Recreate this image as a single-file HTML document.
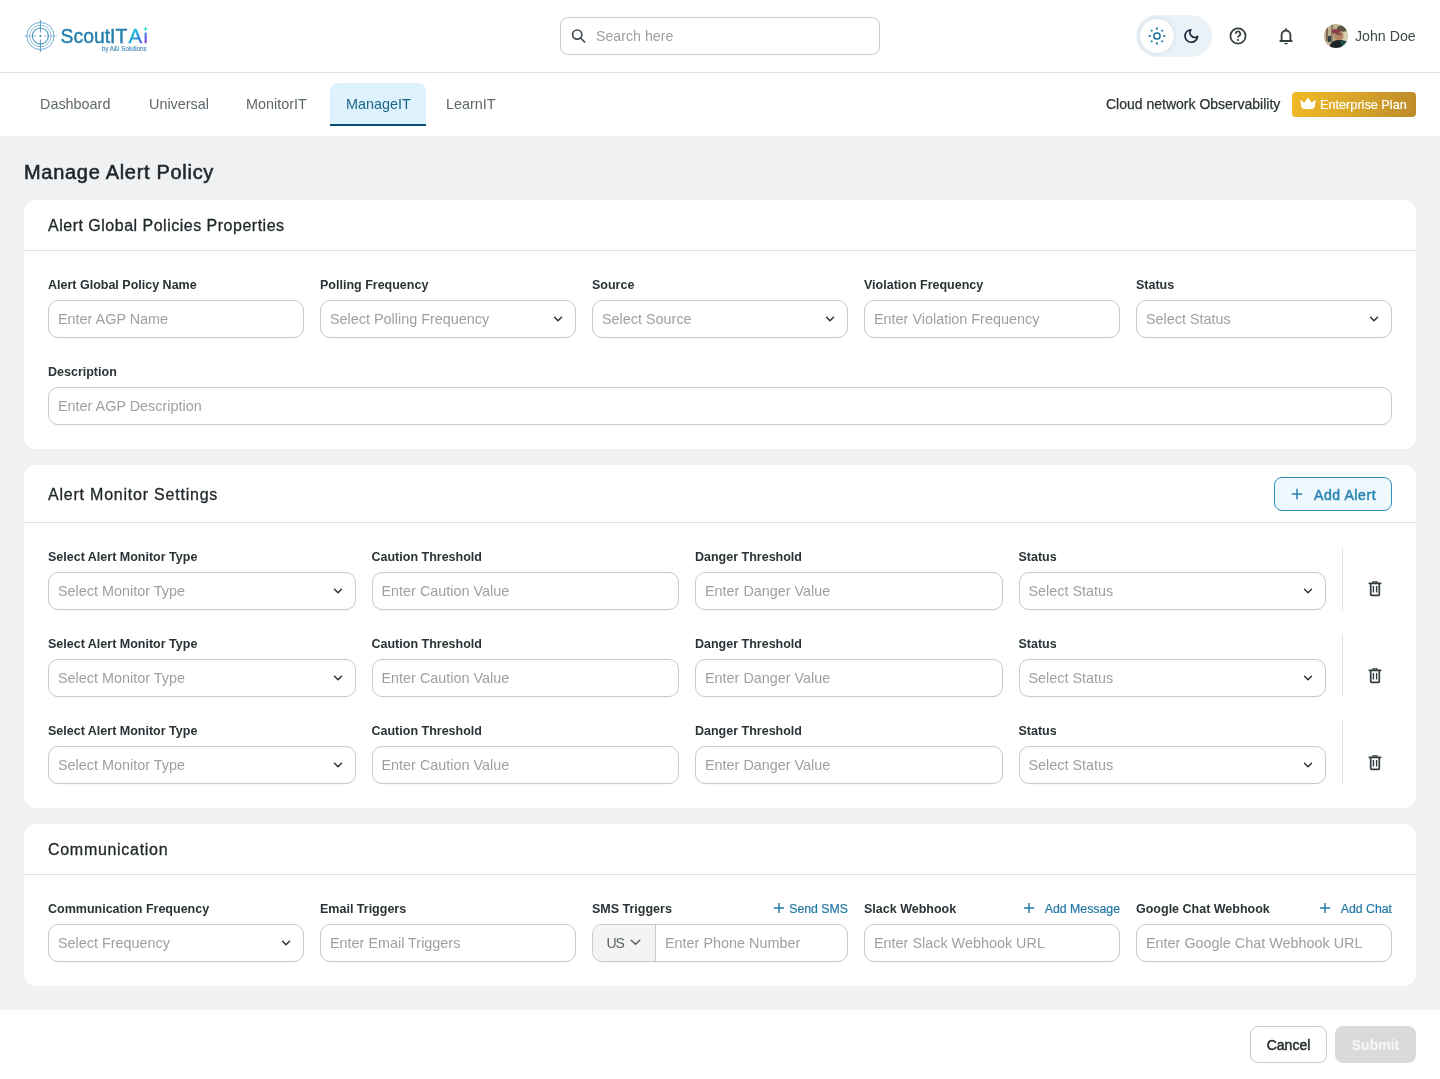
<!DOCTYPE html>
<html><head><meta charset="utf-8">
<style>
*{box-sizing:border-box;margin:0;padding:0}
html,body{width:1440px;height:1079px;overflow:hidden;background:#fff;font-family:"Liberation Sans",sans-serif}
body{-webkit-font-smoothing:antialiased}
#wrap{position:absolute;left:0;top:0;width:1440px;height:1079px;will-change:transform;opacity:0.999}
.abs{position:absolute}
#hdr{position:absolute;left:0;top:0;width:1440px;height:73px;background:#fff;border-bottom:1px solid #e4e4e5}
#nav{position:absolute;left:0;top:73px;width:1440px;height:63px;background:#fff}
#main{position:absolute;left:0;top:136px;width:1440px;height:874px;background:#f0f1f3}
#foot{position:absolute;left:0;top:1010px;width:1440px;height:69px;background:#fff}
.card{position:absolute;left:24px;width:1392px;background:#fff;border-radius:12px}
.chd{position:absolute;left:0;top:0;width:1392px;border-bottom:1px solid #e0e1e2}
.ctitle{position:absolute;left:24px;font-size:16px;line-height:20px;color:#1f2629;letter-spacing:0.5px;white-space:nowrap;-webkit-text-stroke:0.3px #1f2629}
.lbl{position:absolute;font-weight:bold;font-size:12.5px;line-height:16px;color:#2b3336;white-space:nowrap}
.inp{position:absolute;height:38px;border:1px solid #c8cacc;border-radius:10px;background:#fff;font-size:14.4px;line-height:36px;color:#9da1a4;padding-left:9px;white-space:nowrap;overflow:hidden;box-shadow:0 1px 1px rgba(0,0,0,0.03)}
.chev{position:absolute;right:12px;top:15px;width:10px;height:6px}
.tab{position:absolute;top:10px;height:43px;font-size:14.4px;line-height:43px;color:#5d676b;white-space:nowrap}
.link{position:absolute;font-size:12.3px;line-height:16px;color:#2479a8;white-space:nowrap;-webkit-text-stroke:0.2px #2479a8}
</style></head>
<body>
<div id="wrap">
<div id="hdr">
  <!-- logo -->
  <svg class="abs" style="left:20px;top:16px" width="44" height="40" viewBox="20 16 44 40">
    <g fill="none" stroke="#4f97bf" stroke-width="1">
      <circle cx="40.4" cy="36" r="13.6" opacity="0.8"/>
      <circle cx="40.4" cy="36" r="10.8" opacity="0.6"/>
      <circle cx="40.4" cy="36" r="8" stroke-width="1.1"/>
      <line x1="40.4" y1="20" x2="40.4" y2="32.5"/>
      <line x1="40.4" y1="39.5" x2="40.4" y2="52"/>
      <line x1="24" y1="36" x2="37" y2="36" opacity="0.5"/>
      <line x1="44" y1="36" x2="57" y2="36" opacity="0.5"/>
    </g>
    <circle cx="40.4" cy="36" r="1" fill="#2b7fad"/>
  </svg>
  <svg class="abs" style="left:56px;top:16px" width="104" height="40" viewBox="56 16 104 40">
    <defs><linearGradient id="ga" x1="129" y1="28" x2="148" y2="44" gradientUnits="userSpaceOnUse"><stop offset="0" stop-color="#14f0bd"/><stop offset="0.55" stop-color="#2a86e6"/><stop offset="1" stop-color="#8a3bd2"/></linearGradient></defs>
    <text x="60.6" y="43.3" font-family="Liberation Sans" font-size="20.8" fill="#237fad" stroke="#237fad" stroke-width="0.45" textLength="66.6" lengthAdjust="spacingAndGlyphs">ScoutIT</text>
    <text x="128.6" y="43.3" font-family="Liberation Sans" font-size="20.8" fill="url(#ga)" stroke="url(#ga)" stroke-width="0.35" textLength="13.6" lengthAdjust="spacingAndGlyphs">A</text>
    <rect x="144.6" y="32.6" width="2.1" height="10.7" fill="url(#ga)"/>
    <path d="M145.6 26.2 L146.3 28.2 L148.2 28.9 L146.3 29.6 L145.6 31.6 L144.9 29.6 L143 28.9 L144.9 28.2Z" fill="#22e3c4"/>
    <text x="101.8" y="51.3" font-family="Liberation Sans" font-size="6.6" fill="#4a8fbb" stroke="#4a8fbb" stroke-width="0.15" textLength="44.8" lengthAdjust="spacingAndGlyphs">by A&amp;I Solutions</text>
  </svg>
  <!-- search -->
  <div class="abs" style="left:560px;top:17px;width:320px;height:38px;border:1px solid #c8cacc;border-radius:8px;background:#fff"></div>
  <svg class="abs" style="left:570px;top:27px" width="18" height="18" viewBox="0 0 18 18">
    <circle cx="7.2" cy="7.6" r="4.6" fill="none" stroke="#434d51" stroke-width="1.7"/>
    <line x1="10.6" y1="11" x2="14.6" y2="15" stroke="#434d51" stroke-width="1.7" stroke-linecap="round"/>
  </svg>
  <div class="abs" style="left:596px;top:26px;font-size:14.2px;line-height:20px;color:#9aa0a4;white-space:nowrap">Search here</div>

  <!-- toggle -->
  <div class="abs" style="left:1136px;top:15px;width:76px;height:42px;border-radius:21px;background:#ebf2f7"></div>
  <div class="abs" style="left:1140px;top:19px;width:34px;height:34px;border-radius:17px;background:#fff;box-shadow:0 0 4px rgba(120,140,160,0.25)"></div>
  <svg class="abs" style="left:1147px;top:26px" width="20" height="20" viewBox="0 0 20 20">
    <g stroke="#1b6f9c" stroke-width="1.7" stroke-linecap="butt" fill="none">
      <circle cx="10" cy="10" r="3.1" stroke-width="1.5"/>
      <line x1="10" y1="1.6" x2="10" y2="3.8"/><line x1="10" y1="16.2" x2="10" y2="18.4"/>
      <line x1="1.6" y1="10" x2="3.8" y2="10"/><line x1="16.2" y1="10" x2="18.4" y2="10"/>
      <line x1="4.1" y1="4.1" x2="5.4" y2="5.4"/><line x1="14.6" y1="14.6" x2="15.9" y2="15.9"/>
      <line x1="4.1" y1="15.9" x2="5.4" y2="14.6"/><line x1="14.6" y1="5.4" x2="15.9" y2="4.1"/>
    </g>
  </svg>
  <svg class="abs" style="left:1181px;top:26px" width="20" height="20" viewBox="0 0 20 20">
    <path d="M9.9 3.7 A6.3 6.3 0 1 0 16.6 10.4 A4.8 4.8 0 0 1 9.9 3.7 Z" fill="none" stroke="#0e2233" stroke-width="1.6" stroke-linejoin="round"/>
  </svg>

  <!-- help -->
  <svg class="abs" style="left:1228px;top:26px" width="20" height="20" viewBox="0 0 20 20">
    <circle cx="10" cy="10" r="7.6" fill="none" stroke="#333c40" stroke-width="1.7"/>
    <path d="M7.7 7.8 A2.3 2.3 0 1 1 10.9 9.9 C10.2 10.3 10 10.8 10 11.6" fill="none" stroke="#333c40" stroke-width="1.7" stroke-linecap="butt"/>
    <rect x="9.1" y="13.1" width="1.8" height="1.8" fill="#333c40"/>
  </svg>
  <!-- bell -->
  <svg class="abs" style="left:1276px;top:26px" width="20" height="20" viewBox="0 0 20 20">
    <path d="M5.6 15 V8.9 A4.4 4.4 0 0 1 14.4 8.9 V15" fill="none" stroke="#333c40" stroke-width="1.8"/>
    <line x1="4.3" y1="15" x2="15.7" y2="15" stroke="#333c40" stroke-width="1.8" stroke-linecap="round"/>
    <circle cx="10" cy="3.2" r="1" fill="#333c40"/>
    <path d="M8.8 17.6 H11.2" stroke="#333c40" stroke-width="1.3" stroke-linecap="round"/>
  </svg>
  <!-- avatar -->
  <svg class="abs" style="left:1324px;top:24px" width="24" height="24" viewBox="0 0 24 24">
    <defs><clipPath id="avc"><circle cx="12" cy="12" r="12"/></clipPath><filter id="avb" filterUnits="userSpaceOnUse" x="-4" y="-4" width="32" height="32"><feGaussianBlur stdDeviation="0.55"/></filter></defs>
    <g clip-path="url(#avc)"><g filter="url(#avb)">
      <rect x="-2" y="-2" width="28" height="28" fill="#c2b393"/>
      <rect x="2" y="2" width="2" height="16" fill="#7a6a55"/>
      <rect x="7" y="0" width="2.2" height="18" fill="#8d7d66"/>
      <rect x="4" y="12" width="3" height="6" fill="#2f3f45"/>
      <ellipse cx="18.5" cy="4.5" rx="5.5" ry="3.2" fill="#5a5744"/>
      <ellipse cx="23" cy="9.5" rx="2.5" ry="1.5" fill="#3d7a6e"/>
      <rect x="18" y="8" width="6" height="9" fill="#d9cdb0"/>
      <ellipse cx="14.8" cy="11.5" rx="4.6" ry="5.6" fill="#b48566"/>
      <ellipse cx="12" cy="7.3" rx="4.2" ry="2.4" fill="#8b3a4d"/>
      <rect x="12.5" y="9.6" width="5" height="1.3" fill="#6a5040"/>
      <ellipse cx="9" cy="19.5" rx="1.2" ry="1.6" fill="#c27a2e"/>
      <path d="M4 26 L7 19 Q11 15.5 15 16.2 Q20 15.5 25 19 L26 26 Z" fill="#1c2526"/>
      <path d="M16 16.5 Q21 16 25 19.5 L25 26 L19 26 Q18 21 16 16.5Z" fill="#1d4d50"/>
      <rect x="-2" y="17" width="6" height="10" fill="#b7ab8c"/>
    </g></g>
  </svg>
  <div class="abs" style="left:1355px;top:26px;font-size:14.2px;line-height:20px;color:#3f474b;white-space:nowrap">John Doe</div>
</div>

<div id="nav">
  <div class="tab" style="left:40px">Dashboard</div>
  <div class="tab" style="left:149px">Universal</div>
  <div class="tab" style="left:246px">MonitorIT</div>
  <div class="abs" style="left:330px;top:10px;width:96px;height:43px;background:#ddf2fc;border-radius:8px 8px 0 0;border-bottom:2px solid #0a4e74"></div>
  <div class="tab" style="left:346px;color:#1a6588">ManageIT</div>
  <div class="tab" style="left:446px">LearnIT</div>

  <div class="abs" style="left:1106px;top:21px;font-size:14px;line-height:20px;color:#2b3437;white-space:nowrap;-webkit-text-stroke:0.25px #2b3437">Cloud network Observability</div>
  <div class="abs" style="left:1292px;top:19px;width:124px;height:25px;border-radius:4px;background:linear-gradient(100deg,#f1b925 0%,#d9a629 50%,#bd8a2b 100%)"></div>
  <svg class="abs" style="left:1299px;top:97px;top:24px" width="18" height="14" viewBox="0 0 18 14">
    <path d="M1.8 3.6 L5.4 6.6 L9 1.6 L12.6 6.6 L16.2 3.6 L14.8 10.6 Q9 12.6 3.2 10.6 Z" fill="#fff" stroke="#fff" stroke-width="1.2" stroke-linejoin="round"/>
  </svg>
  <div class="abs" style="left:1320px;top:23.7px;font-size:12.7px;line-height:16px;color:#fff;white-space:nowrap;-webkit-text-stroke:0.2px #fff">Enterprise Plan</div>
</div>

<div id="main">
  <div class="abs" style="left:24px;top:23px;font-size:20px;line-height:26px;color:#1f2629;letter-spacing:0.7px;white-space:nowrap;-webkit-text-stroke:0.55px #1f2629">Manage Alert Policy</div>
</div>

<!-- CARD 1 -->
<div class="card" style="top:200px;height:249px">
  <div class="chd" style="height:51px"></div>
  <div class="ctitle" style="top:15.7px">Alert Global Policies Properties</div>
</div>

<!-- CARD 2 -->
<div class="card" style="top:465px;height:343px">
  <div class="chd" style="height:58px"></div>
  <div class="ctitle" style="top:19.7px;letter-spacing:0.78px">Alert Monitor Settings</div>
</div>

<!-- CARD 3 -->
<div class="card" style="top:824px;height:162px">
  <div class="chd" style="height:51px"></div>
  <div class="ctitle" style="top:15.7px;letter-spacing:0.7px">Communication</div>
</div>

<!--FIELDS-->
<div class="lbl" style="left:48px;top:276.7px">Alert Global Policy Name</div>
<div class="inp" style="left:48px;top:300px;width:256px">Enter AGP Name</div>
<div class="lbl" style="left:320px;top:276.7px">Polling Frequency</div>
<div class="inp" style="left:320px;top:300px;width:256px">Select Polling Frequency<svg class="chev" viewBox="0 0 10 6"><path d="M1.5 1.3 L5 4.7 L8.5 1.3" fill="none" stroke="#2b3336" stroke-width="1.5" stroke-linecap="round" stroke-linejoin="round"/></svg></div>
<div class="lbl" style="left:592px;top:276.7px">Source</div>
<div class="inp" style="left:592px;top:300px;width:256px">Select Source<svg class="chev" viewBox="0 0 10 6"><path d="M1.5 1.3 L5 4.7 L8.5 1.3" fill="none" stroke="#2b3336" stroke-width="1.5" stroke-linecap="round" stroke-linejoin="round"/></svg></div>
<div class="lbl" style="left:864px;top:276.7px">Violation Frequency</div>
<div class="inp" style="left:864px;top:300px;width:256px">Enter Violation Frequency</div>
<div class="lbl" style="left:1136px;top:276.7px">Status</div>
<div class="inp" style="left:1136px;top:300px;width:256px">Select Status<svg class="chev" viewBox="0 0 10 6"><path d="M1.5 1.3 L5 4.7 L8.5 1.3" fill="none" stroke="#2b3336" stroke-width="1.5" stroke-linecap="round" stroke-linejoin="round"/></svg></div>
<div class="lbl" style="left:48px;top:363.7px">Description</div>
<div class="inp" style="left:48px;top:387px;width:1344px">Enter AGP Description</div>
<div class="lbl" style="left:48px;top:548.7px">Select Alert Monitor Type</div>
<div class="inp" style="left:48px;top:572px;width:307.5px">Select Monitor Type<svg class="chev" viewBox="0 0 10 6"><path d="M1.5 1.3 L5 4.7 L8.5 1.3" fill="none" stroke="#2b3336" stroke-width="1.5" stroke-linecap="round" stroke-linejoin="round"/></svg></div>
<div class="lbl" style="left:371.5px;top:548.7px">Caution Threshold</div>
<div class="inp" style="left:371.5px;top:572px;width:307.5px">Enter Caution Value</div>
<div class="lbl" style="left:695px;top:548.7px">Danger Threshold</div>
<div class="inp" style="left:695px;top:572px;width:307.5px">Enter Danger Value</div>
<div class="lbl" style="left:1018.5px;top:548.7px">Status</div>
<div class="inp" style="left:1018.5px;top:572px;width:307.5px">Select Status<svg class="chev" viewBox="0 0 10 6"><path d="M1.5 1.3 L5 4.7 L8.5 1.3" fill="none" stroke="#2b3336" stroke-width="1.5" stroke-linecap="round" stroke-linejoin="round"/></svg></div>
<div class="abs" style="left:1342px;top:547px;width:1px;height:63px;background:#e2e3e4"></div>
<svg class="abs" style="left:1366px;top:579px" width="18" height="20" viewBox="0 0 18 20"><path d="M3.3 4.3 H14.7" stroke="#333c40" stroke-width="1.7" stroke-linecap="round"/><path d="M7 3.9 V2.9 H11 V3.9" fill="none" stroke="#333c40" stroke-width="1.3"/><path d="M4.7 4.6 V15.5 Q4.7 16.4 5.6 16.4 H12.4 Q13.3 16.4 13.3 15.5 V4.6" fill="none" stroke="#333c40" stroke-width="1.7"/><path d="M7.4 7 V13.6 M10.6 7 V13.6" stroke="#333c40" stroke-width="1.4"/></svg>
<div class="lbl" style="left:48px;top:635.7px">Select Alert Monitor Type</div>
<div class="inp" style="left:48px;top:659px;width:307.5px">Select Monitor Type<svg class="chev" viewBox="0 0 10 6"><path d="M1.5 1.3 L5 4.7 L8.5 1.3" fill="none" stroke="#2b3336" stroke-width="1.5" stroke-linecap="round" stroke-linejoin="round"/></svg></div>
<div class="lbl" style="left:371.5px;top:635.7px">Caution Threshold</div>
<div class="inp" style="left:371.5px;top:659px;width:307.5px">Enter Caution Value</div>
<div class="lbl" style="left:695px;top:635.7px">Danger Threshold</div>
<div class="inp" style="left:695px;top:659px;width:307.5px">Enter Danger Value</div>
<div class="lbl" style="left:1018.5px;top:635.7px">Status</div>
<div class="inp" style="left:1018.5px;top:659px;width:307.5px">Select Status<svg class="chev" viewBox="0 0 10 6"><path d="M1.5 1.3 L5 4.7 L8.5 1.3" fill="none" stroke="#2b3336" stroke-width="1.5" stroke-linecap="round" stroke-linejoin="round"/></svg></div>
<div class="abs" style="left:1342px;top:634px;width:1px;height:63px;background:#e2e3e4"></div>
<svg class="abs" style="left:1366px;top:666px" width="18" height="20" viewBox="0 0 18 20"><path d="M3.3 4.3 H14.7" stroke="#333c40" stroke-width="1.7" stroke-linecap="round"/><path d="M7 3.9 V2.9 H11 V3.9" fill="none" stroke="#333c40" stroke-width="1.3"/><path d="M4.7 4.6 V15.5 Q4.7 16.4 5.6 16.4 H12.4 Q13.3 16.4 13.3 15.5 V4.6" fill="none" stroke="#333c40" stroke-width="1.7"/><path d="M7.4 7 V13.6 M10.6 7 V13.6" stroke="#333c40" stroke-width="1.4"/></svg>
<div class="lbl" style="left:48px;top:722.7px">Select Alert Monitor Type</div>
<div class="inp" style="left:48px;top:746px;width:307.5px">Select Monitor Type<svg class="chev" viewBox="0 0 10 6"><path d="M1.5 1.3 L5 4.7 L8.5 1.3" fill="none" stroke="#2b3336" stroke-width="1.5" stroke-linecap="round" stroke-linejoin="round"/></svg></div>
<div class="lbl" style="left:371.5px;top:722.7px">Caution Threshold</div>
<div class="inp" style="left:371.5px;top:746px;width:307.5px">Enter Caution Value</div>
<div class="lbl" style="left:695px;top:722.7px">Danger Threshold</div>
<div class="inp" style="left:695px;top:746px;width:307.5px">Enter Danger Value</div>
<div class="lbl" style="left:1018.5px;top:722.7px">Status</div>
<div class="inp" style="left:1018.5px;top:746px;width:307.5px">Select Status<svg class="chev" viewBox="0 0 10 6"><path d="M1.5 1.3 L5 4.7 L8.5 1.3" fill="none" stroke="#2b3336" stroke-width="1.5" stroke-linecap="round" stroke-linejoin="round"/></svg></div>
<div class="abs" style="left:1342px;top:721px;width:1px;height:63px;background:#e2e3e4"></div>
<svg class="abs" style="left:1366px;top:753px" width="18" height="20" viewBox="0 0 18 20"><path d="M3.3 4.3 H14.7" stroke="#333c40" stroke-width="1.7" stroke-linecap="round"/><path d="M7 3.9 V2.9 H11 V3.9" fill="none" stroke="#333c40" stroke-width="1.3"/><path d="M4.7 4.6 V15.5 Q4.7 16.4 5.6 16.4 H12.4 Q13.3 16.4 13.3 15.5 V4.6" fill="none" stroke="#333c40" stroke-width="1.7"/><path d="M7.4 7 V13.6 M10.6 7 V13.6" stroke="#333c40" stroke-width="1.4"/></svg>
<div class="lbl" style="left:48px;top:900.7px">Communication Frequency</div>
<div class="inp" style="left:48px;top:924px;width:256px">Select Frequency<svg class="chev" viewBox="0 0 10 6"><path d="M1.5 1.3 L5 4.7 L8.5 1.3" fill="none" stroke="#2b3336" stroke-width="1.5" stroke-linecap="round" stroke-linejoin="round"/></svg></div>
<div class="lbl" style="left:320px;top:900.7px">Email Triggers</div>
<div class="inp" style="left:320px;top:924px;width:256px">Enter Email Triggers</div>
<div class="lbl" style="left:592px;top:900.7px">SMS Triggers</div>
<div class="inp" style="left:592px;top:924px;width:256px;padding-left:0"><div class="abs" style="left:0;top:0;width:63px;height:36px;background:#f4f4f5;border-right:1px solid #c8cacc;border-radius:9px 0 0 9px"></div><div class="abs" style="left:13.5px;top:0;color:#596367;font-size:14px;letter-spacing:-1px">US</div><svg class="abs" style="left:37px;top:14px" width="11" height="7" viewBox="0 0 11 7"><path d="M1.2 1.2 L5.5 5.3 L9.8 1.2" fill="none" stroke="#596367" stroke-width="1.5" stroke-linecap="round" stroke-linejoin="round"/></svg><div class="abs" style="left:72px;top:0">Enter Phone Number</div></div>
<div class="lbl" style="left:864px;top:900.7px">Slack Webhook</div>
<div class="inp" style="left:864px;top:924px;width:256px">Enter Slack Webhook URL</div>
<div class="lbl" style="left:1136px;top:900.7px">Google Chat Webhook</div>
<div class="inp" style="left:1136px;top:924px;width:256px">Enter Google Chat Webhook URL</div>
<div class="link" style="right:592px;top:900.7px">Send SMS</div>
<svg class="abs" style="left:773px;top:902px" width="12" height="12" viewBox="0 0 12 12"><path d="M6 1 V11 M1 6 H11" stroke="#2479a8" stroke-width="1.4"/></svg>
<div class="link" style="right:320px;top:900.7px">Add Message</div>
<svg class="abs" style="left:1023px;top:902px" width="12" height="12" viewBox="0 0 12 12"><path d="M6 1 V11 M1 6 H11" stroke="#2479a8" stroke-width="1.4"/></svg>
<div class="link" style="right:48px;top:900.7px">Add Chat</div>
<svg class="abs" style="left:1319px;top:902px" width="12" height="12" viewBox="0 0 12 12"><path d="M6 1 V11 M1 6 H11" stroke="#2479a8" stroke-width="1.4"/></svg>
<div class="abs" style="left:1274px;top:477px;width:118px;height:34px;border:1px solid #2f8fc0;border-radius:8px;background:#eff8fd"></div>
<svg class="abs" style="left:1291px;top:488px" width="12" height="12" viewBox="0 0 12 12"><path d="M6 0.8 V11.2 M0.8 6 H11.2" stroke="#2a83b3" stroke-width="1.5"/></svg>
<div class="abs" style="left:1314px;top:486.5px;font-size:14px;line-height:16px;color:#2a85b5;white-space:nowrap;letter-spacing:0.6px;-webkit-text-stroke:0.5px #2a85b5">Add Alert</div>
<!--/FIELDS-->
<div id="foot">
  <div class="abs" style="left:1250px;top:16px;width:77px;height:37px;border:1px solid #c8cacc;border-radius:8px;background:#fff;font-size:14px;line-height:37px;text-align:center;color:#262d30;-webkit-text-stroke:0.5px #262d30">Cancel</div>
  <div class="abs" style="left:1335px;top:16px;width:81px;height:37px;border-radius:8px;background:#dadada;font-size:14px;line-height:39px;text-align:center;color:#f7f7f7;font-weight:bold">Submit</div>
</div>
</div>
</body></html>
